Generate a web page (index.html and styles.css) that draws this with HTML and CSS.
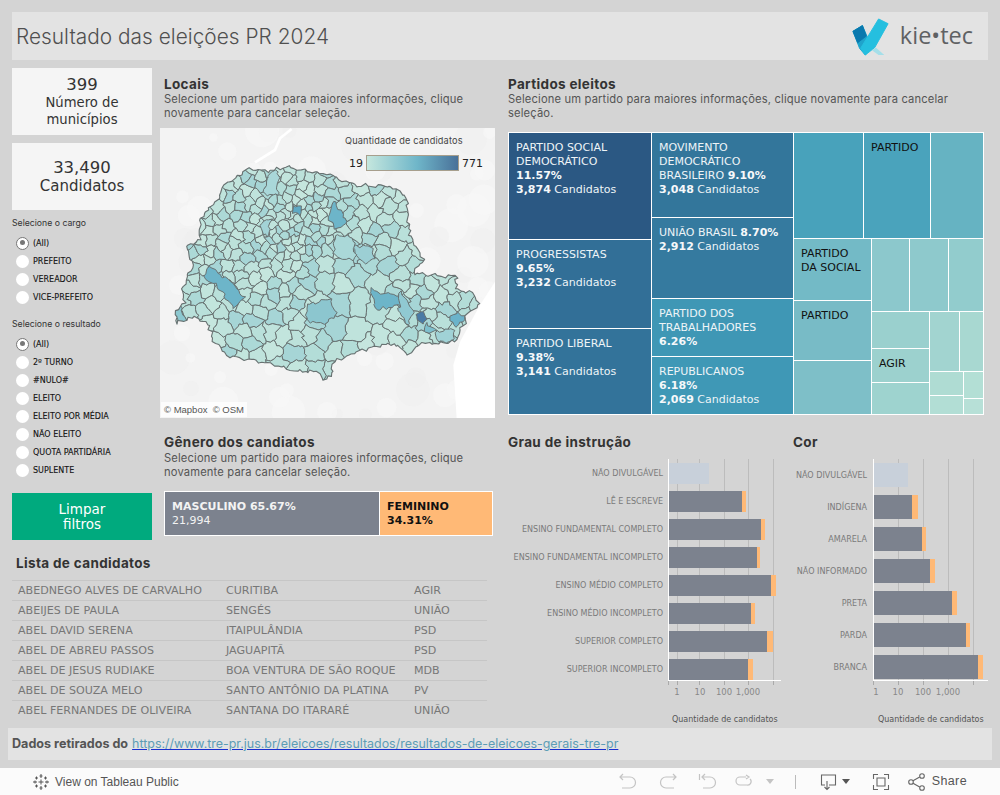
FILE: index.html
```html
<!DOCTYPE html>
<html lang="pt-BR">
<head>
<meta charset="utf-8">
<title>Resultado das eleições PR 2024</title>
<link rel="stylesheet" href="styles.css">
</head>
<body>
<header class="header">
  <h1 class="title">Resultado das eleições PR 2024</h1>
  <div class="logo">
    <svg class="logo-mark" viewBox="0 0 40 42" width="38" height="40" aria-hidden="true">
      <path d="M1 15 11 9 20 30 14 40 8 33Z" fill="#1fa3cb" stroke="#1fa3cb" stroke-linejoin="round"/>
      <path d="M1 15 11 9 15 20 6 27Z" fill="#0a79ae" stroke="#0a79ae" stroke-linejoin="round"/>
      <path d="M28 2 38 7 24 32 14 40 9 33Z" fill="#25bfdf" stroke="#25bfdf" stroke-linejoin="round"/>
      <path d="M25 32 34 40 28 40 21 35Z" fill="#a5dfe9"/>
    </svg>
    <span class="logo-text">kie•tec</span>
  </div>
</header>

<main class="main">
  <div class="wide">
    <div class="upper">
      <aside class="side">
        <div class="card">
          <div class="card-num">399</div>
          <div class="card-label">Número de municípios</div>
        </div>
        <div class="card card-second">
          <div class="card-num">33,490</div>
          <div class="card-label card-label-big">Candidatos</div>
        </div>
        <div class="filter-title">Selecione o cargo</div>
        <ul class="radios">
          <li class="radio-row"><span class="radio radio-on"></span>(All)</li>
          <li class="radio-row"><span class="radio"></span>PREFEITO</li>
          <li class="radio-row"><span class="radio"></span>VEREADOR</li>
          <li class="radio-row"><span class="radio"></span>VICE-PREFEITO</li>
        </ul>
        <div class="filter-title filter-title-second">Selecione o resultado</div>
        <ul class="radios">
          <li class="radio-row"><span class="radio radio-on"></span>(All)</li>
          <li class="radio-row"><span class="radio"></span>2º TURNO</li>
          <li class="radio-row"><span class="radio"></span>#NULO#</li>
          <li class="radio-row"><span class="radio"></span>ELEITO</li>
          <li class="radio-row"><span class="radio"></span>ELEITO POR MÉDIA</li>
          <li class="radio-row"><span class="radio"></span>NÃO ELEITO</li>
          <li class="radio-row"><span class="radio"></span>QUOTA PARTIDÁRIA</li>
          <li class="radio-row"><span class="radio"></span>SUPLENTE</li>
        </ul>
        <button class="clear-btn">Limpar<br>filtros</button>
      </aside>

      <section class="mid">
        <div class="intro">
          <h2 class="heading">Locais</h2>
          <p class="desc">Selecione um partido para maiores informações, clique novamente para cancelar seleção.</p>
        </div>
        <div class="map">
          <svg id="map-svg" class="map-svg" viewBox="0 9 1005 870" aria-hidden="true"></svg>
          <div class="legend">
            <div class="legend-title">Quantidade de candidatos</div>
            <div class="legend-row"><span>19</span><span class="legend-ramp"></span><span>771</span></div>
          </div>
          <div class="attrib">© Mapbox&nbsp; © OSM</div>
        </div>
        <div class="intro intro-gender">
          <h2 class="heading">Gênero dos candiatos</h2>
          <p class="desc">Selecione um partido para maiores informações, clique novamente para cancelar seleção.</p>
        </div>
        <div class="gender">
          <div class="gender-m"><b>MASCULINO 65.67%</b><br>21,994</div>
          <div class="gender-f"><b>FEMININO<br>34.31%</b></div>
        </div>
      </section>
    </div>

    <section class="list">
      <h2 class="heading list-heading">Lista de candidatos</h2>
      <div class="list-table">
        <div class="list-row"><span>ABEDNEGO ALVES DE CARVALHO</span><span>CURITIBA</span><span>AGIR</span></div>
        <div class="list-row"><span>ABEIJES DE PAULA</span><span>SENGÉS</span><span>UNIÃO</span></div>
        <div class="list-row"><span>ABEL DAVID SERENA</span><span>ITAIPULÂNDIA</span><span>PSD</span></div>
        <div class="list-row"><span>ABEL DE ABREU PASSOS</span><span>JAGUAPITÃ</span><span>PSD</span></div>
        <div class="list-row"><span>ABEL DE JESUS RUDIAKE</span><span>BOA VENTURA DE SÃO ROQUE</span><span>MDB</span></div>
        <div class="list-row"><span>ABEL DE SOUZA MELO</span><span>SANTO ANTÔNIO DA PLATINA</span><span>PV</span></div>
        <div class="list-row"><span>ABEL FERNANDES DE OLIVEIRA</span><span>SANTANA DO ITARARÉ</span><span>UNIÃO</span></div>
      </div>
    </section>
  </div>

  <div class="right">
    <div class="intro intro-right">
      <h2 class="heading">Partidos eleitos</h2>
      <p class="desc">Selecione um partido para maiores informações, clique novamente para cancelar seleção.</p>
    </div>
    <div class="tm">
      <div class="tm-col" style="width:142px">
        <div class="tm-cell tm-light" style="height:106px;background:#2b5883">PARTIDO SOCIAL DEMOCRÁTICO<br><b>11.57%</b><br><b>3,874</b> Candidatos</div>
        <div class="tm-cell tm-light" style="height:88px;background:#326f97">PROGRESSISTAS<br><b>9.65%</b><br><b>3,232</b> Candidatos</div>
        <div class="tm-cell tm-light" style="height:85px;background:#33739a">PARTIDO LIBERAL<br><b>9.38%</b><br><b>3,141</b> Candidatos</div>
      </div>
      <div class="tm-col" style="width:141px">
        <div class="tm-cell tm-light" style="height:84px;background:#33769b">MOVIMENTO DEMOCRÁTICO BRASILEIRO <b>9.10%</b><br><b>3,048</b> Candidatos</div>
        <div class="tm-cell tm-light" style="height:80px;background:#357a9f">UNIÃO BRASIL <b>8.70%</b><br><b>2,912</b> Candidatos</div>
        <div class="tm-cell tm-light" style="height:57px;background:#3f97b5">PARTIDO DOS TRABALHADORES<br><b>6.26%</b></div>
        <div class="tm-cell tm-light" style="height:57px;background:#3f98b6">REPUBLICANOS<br><b>6.18%</b><br><b>2,069</b> Candidatos</div>
      </div>
      <div class="tm-col" style="width:189px">
        <div class="tm-row" style="height:105px">
          <div class="tm-cell" style="width:69px;background:#48a2bb"></div>
          <div class="tm-cell" style="width:66px;background:#4aa3bc">PARTIDO</div>
          <div class="tm-cell" style="width:52px;background:#66b3c2"></div>
        </div>
        <div class="tm-row" style="height:175px">
          <div class="tm-col" style="width:77px">
            <div class="tm-cell" style="height:61px;background:#73bac6">PARTIDO DA SOCIAL</div>
            <div class="tm-cell" style="height:59px;background:#78bbc6">PARTIDO</div>
            <div class="tm-cell" style="height:53px;background:#7ebfc8"></div>
          </div>
          <div class="tm-col" style="width:111px">
            <div class="tm-row" style="height:72px">
              <div class="tm-cell" style="width:37px;background:#8cc8cc"></div>
              <div class="tm-cell" style="width:38px;background:#8ec9cc"></div>
              <div class="tm-cell" style="width:34px;background:#92cccd"></div>
            </div>
            <div class="tm-row" style="height:102px">
              <div class="tm-col" style="width:57px">
                <div class="tm-cell" style="height:36px;background:#9ad0ce"></div>
                <div class="tm-cell" style="height:33px;background:#9cd1ce">AGIR</div>
                <div class="tm-cell" style="height:31px;background:#9ed3cf"></div>
              </div>
              <div class="tm-col" style="width:53px">
                <div class="tm-row" style="height:59px">
                  <div class="tm-cell" style="width:29px;background:#a2d4d0"></div>
                  <div class="tm-cell" style="width:23px;background:#a8d8d1"></div>
                </div>
                <div class="tm-row" style="height:42px">
                  <div class="tm-col" style="width:33px">
                    <div class="tm-cell" style="height:23px;background:#afdcd3"></div>
                    <div class="tm-cell" style="height:18px;background:#b2ded5"></div>
                  </div>
                  <div class="tm-col" style="width:19px">
                    <div class="tm-cell" style="height:26px;background:#b3dfd5"></div>
                    <div class="tm-cell" style="height:15px;background:#b7e0d7"></div>
                  </div>
                </div>
              </div>
            </div>
          </div>
        </div>
      </div>
    </div>

    <div class="charts">
      <section class="chart-grau">
        <h2 class="heading">Grau de instrução</h2>
        <div class="chart">
          <i class="gridline" style="left:169px"></i><i class="gridline" style="left:191px"></i><i class="gridline" style="left:216px"></i><i class="gridline" style="left:240px"></i><i class="gridline" style="left:265px"></i>
          <div class="rows">
            <div class="row"><span class="row-label">NÃO DIVULGÁVEL</span><span class="plot"><b class="bar bar-na" style="width:40px"></b></span></div>
            <div class="row"><span class="row-label">LÊ E ESCREVE</span><span class="plot"><b class="bar bar-m" style="width:73px"></b><b class="bar bar-f" style="width:4px"></b></span></div>
            <div class="row"><span class="row-label">ENSINO FUNDAMENTAL COMPLETO</span><span class="plot"><b class="bar bar-m" style="width:92px"></b><b class="bar bar-f" style="width:4px"></b></span></div>
            <div class="row"><span class="row-label">ENSINO FUNDAMENTAL INCOMPLETO</span><span class="plot"><b class="bar bar-m" style="width:88px"></b><b class="bar bar-f" style="width:3px"></b></span></div>
            <div class="row"><span class="row-label">ENSINO MÉDIO COMPLETO</span><span class="plot"><b class="bar bar-m" style="width:102px"></b><b class="bar bar-f" style="width:5px"></b></span></div>
            <div class="row"><span class="row-label">ENSINO MÉDIO INCOMPLETO</span><span class="plot"><b class="bar bar-m" style="width:82px"></b><b class="bar bar-f" style="width:4px"></b></span></div>
            <div class="row"><span class="row-label">SUPERIOR COMPLETO</span><span class="plot"><b class="bar bar-m" style="width:98px"></b><b class="bar bar-f" style="width:6px"></b></span></div>
            <div class="row"><span class="row-label">SUPERIOR INCOMPLETO</span><span class="plot"><b class="bar bar-m" style="width:79px"></b><b class="bar bar-f" style="width:5px"></b></span></div>
          </div>
          <div class="axis">
            <i class="tick" style="left:0"></i><i class="tick" style="left:9px"></i><i class="tick" style="left:31px"></i><i class="tick" style="left:56px"></i><i class="tick" style="left:80px"></i><i class="tick" style="left:105px"></i>
            <span class="tick-label" style="left:9px">1</span><span class="tick-label" style="left:32px">10</span><span class="tick-label" style="left:56px">100</span><span class="tick-label" style="left:80px">1,000</span>
          </div>
          <div class="axis-title">Quantidade de candidatos</div>
        </div>
      </section>
      <section class="chart-cor">
        <h2 class="heading">Cor</h2>
        <div class="chart">
          <i class="gridline" style="left:105px"></i><i class="gridline" style="left:130px"></i><i class="gridline" style="left:155px"></i><i class="gridline" style="left:180px"></i>
          <div class="rows">
            <div class="row"><span class="row-label">NÃO DIVULGÁVEL</span><span class="plot"><b class="bar bar-na" style="width:34px"></b></span></div>
            <div class="row"><span class="row-label">INDÍGENA</span><span class="plot"><b class="bar bar-m" style="width:38px"></b><b class="bar bar-f" style="width:6px"></b></span></div>
            <div class="row"><span class="row-label">AMARELA</span><span class="plot"><b class="bar bar-m" style="width:48px"></b><b class="bar bar-f" style="width:4px"></b></span></div>
            <div class="row"><span class="row-label">NÃO INFORMADO</span><span class="plot"><b class="bar bar-m" style="width:56px"></b><b class="bar bar-f" style="width:5px"></b></span></div>
            <div class="row"><span class="row-label">PRETA</span><span class="plot"><b class="bar bar-m" style="width:78px"></b><b class="bar bar-f" style="width:5px"></b></span></div>
            <div class="row"><span class="row-label">PARDA</span><span class="plot"><b class="bar bar-m" style="width:92px"></b><b class="bar bar-f" style="width:4px"></b></span></div>
            <div class="row"><span class="row-label">BRANCA</span><span class="plot"><b class="bar bar-m" style="width:104px"></b><b class="bar bar-f" style="width:5px"></b></span></div>
          </div>
          <div class="axis">
            <i class="tick" style="left:0"></i><i class="tick" style="left:25px"></i><i class="tick" style="left:50px"></i><i class="tick" style="left:75px"></i><i class="tick" style="left:100px"></i>
            <span class="tick-label" style="left:3px">1</span><span class="tick-label" style="left:25px">10</span><span class="tick-label" style="left:50px">100</span><span class="tick-label" style="left:75px">1,000</span>
          </div>
          <div class="axis-title">Quantidade de candidatos</div>
        </div>
      </section>
    </div>
  </div>
</main>

<footer class="source">
  <b class="source-label">Dados retirados do</b>
  <a class="source-link" href="#">https://www.tre-pr.jus.br/eleicoes/resultados/resultados-de-eleicoes-gerais-tre-pr</a>
</footer>

<nav class="toolbar">
  <div class="tb-left">
    <svg class="tb-logo" viewBox="0 0 18 18" width="18" height="18" aria-hidden="true">
      <path d="M9 1v4M7.500 3h3M9 13v4M7.500 15h3M1 9h4M3 7.500v3M13 9h4M15 7.500v3M9 6.500v5M6.500 9h5M4.500 3.500v3M3 5h3M13.500 3.500v3M12 5h3M4.500 11.500v3M3 13h3M13.500 11.500v3M12 13h3" fill="none" stroke="#555" stroke-width="1"/>
    </svg>
    <span>View on Tableau Public</span>
  </div>
  <div class="tb-right">
    <svg class="tb-icon" viewBox="0 0 20 20" width="20" height="20" aria-hidden="true"><path d="M2 5h10a5.500 5.500 0 0 1 0 11H4M5 2 2 5l3 3" class="stroke-dim"/></svg>
    <svg class="tb-icon" viewBox="0 0 20 20" width="20" height="20" aria-hidden="true"><path d="M18 5H8a5.500 5.500 0 0 0 0 11h8M15 2l3 3-3 3" class="stroke-dim"/></svg>
    <svg class="tb-icon tb-revert" viewBox="0 0 20 20" width="20" height="20" aria-hidden="true"><path d="M4 5h8a5.500 5.500 0 0 1 0 11H5M7 2 4 5l3 3M1.500 2v6" class="stroke-dim"/></svg>
    <svg class="tb-icon tb-refresh" viewBox="0 0 20 20" width="20" height="20" aria-hidden="true"><path d="M13 5H7a3.500 3.500 0 0 0 0 8h7a3.500 3.500 0 0 0 3-6M13 3l3 2-3 2" class="stroke-dim"/></svg>
    <span class="caret caret-dim"></span>
    <span class="tb-sep"></span>
    <svg class="tb-icon tb-download" viewBox="0 0 20 20" width="20" height="20" aria-hidden="true"><path d="M6 13H2.500V3h14v10H10M8 9v8M5.500 15 8 17.500 10.500 15" class="stroke-dark"/></svg>
    <span class="caret"></span>
    <svg class="tb-icon tb-full" viewBox="0 0 20 20" width="20" height="20" aria-hidden="true"><path d="M2.500 7V2.500H7M13 2.500h4.500V7M2.500 13v4.500H7M13 17.500h4.500V13M6 6h8v8H6z" class="stroke-dark"/></svg>
    <svg class="tb-icon tb-share" viewBox="0 0 20 20" width="20" height="20" aria-hidden="true"><path d="M6 8.800 12.700 5M6 11.200l6.700 3.800" class="stroke-dark"/><circle cx="4" cy="10" r="2.300" class="stroke-dark"/><circle cx="15" cy="4" r="2.300" class="stroke-dark"/><circle cx="15" cy="16" r="2.300" class="stroke-dark"/></svg>
    <span class="tb-share-label">Share</span>
  </div>
</nav>
<script src="map.js"></script>
</body>
</html>
```

FILE: styles.css
```css
* { box-sizing: border-box; }
html, body { margin: 0; padding: 0; }
body {
  width: 1000px; height: 795px; overflow: hidden;
  background: #d4d4d4; color: #333;
  font-family: "DejaVu Sans", sans-serif;
  padding-top: 12px;
}
h1, h2, p, ul { margin: 0; padding: 0; }
ul { list-style: none; }

.header {
  height: 48px; margin: 0 12px; background: #e3e3e3;
  display: flex; align-items: center; justify-content: space-between;
  padding: 0 15px 0 4px;
}
.title { font: 300 20.8px/1 "Inter", sans-serif; color: #505050; letter-spacing: 0.04px; padding-top: 2px; }
.logo { display: flex; align-items: center; gap: 10px; }
.logo-mark { display: block; margin-top: 2px; }
.logo-text { font: 400 23.5px/1 "Open Sans", sans-serif; color: #5f6163; letter-spacing: 0; }

.main { display: flex; height: 660px; margin-top: 8px; padding-left: 12px; }
.wide { width: 484px; margin-right: 12px; }
.upper { display: flex; height: 487px; }
.side { width: 140px; flex: none; }
.card {
  height: 67px; background: #f5f5f5; text-align: center;
  display: flex; flex-direction: column; justify-content: center;
  color: #333;
}
.card-second { margin-top: 8px; }
.card-num { font-size: 16.5px; line-height: 18px; }
.card-label { font-size: 13.2px; line-height: 17px; width: 110px; margin: 0 auto; }
.card-label-big { font-size: 15px; line-height: 18px; }
.filter-title { font: 400 8.7px/10px "Inter", sans-serif; color: #333; margin-top: 8px; height: 16px; }
.filter-title-second { margin-top: 13px; }
.radio-row {
  height: 18px; display: flex; align-items: center; padding-left: 4px; gap: 4px;
  font-size: 8px; color: #111; -webkit-text-stroke: 0.1px #111;
}
.radio {
  width: 13px; height: 13px; border-radius: 50%; background: #fff; flex: none; position: relative;
}
.radio-on { border: 1.500px solid #777; }
.radio-on::after {
  content: ""; position: absolute; left: 2.500px; top: 2.500px;
  width: 5px; height: 5px; border-radius: 50%; background: #777;
}
.clear-btn {
  display: block; width: 140px; height: 47px; margin-top: 14px; border: 0; padding: 0;
  background: #00aa7e; color: #fff; font: 400 13.5px/15px "DejaVu Sans", sans-serif;
}

.mid { width: 336px; margin-left: 8px; flex: none; }
.intro { padding-left: 4px; height: 60px; padding-top: 8px; }
.heading { font: 700 13.5px/16px "Inter", sans-serif; color: #333; letter-spacing: 0.35px; }
.desc { font: 400 11.2px/14px "Inter", sans-serif; color: #555; letter-spacing: 0.15px; }
.map { position: relative; width: 335px; height: 290px; background: #f3f3f3; overflow: hidden; }
.map-svg { display: block; width: 335px; height: 290px; }
.legend { position: absolute; left: 185px; top: 7px; width: 150px; }
.legend-title { font: 400 9.2px/12px "Inter", sans-serif; color: #444; letter-spacing: .15px; }
.legend-row { display: flex; align-items: center; margin-top: 8px; font-size: 11px; color: #222; padding-left: 4px; }
.legend-ramp {
  flex: none; width: 93px; height: 16px; margin: 0 3px;
  border: 1px solid #a79f8d;
  background: linear-gradient(90deg, #c5e7de, #6fb6c9 55%, #497199);
}
.attrib {
  position: absolute; left: 1px; bottom: 1px; padding: 2px 3px; height: 15px;
  background: rgba(255,255,255,.75); color: #555;
  font: 400 9.5px/11px "Liberation Sans", sans-serif;
}
.intro-gender { height: 73px; padding-top: 16px; }
.intro-gender .heading { margin-bottom: 1px; }
.gender {
  margin-left: 4px; width: 329px; height: 45px; border: 1px solid #fff; background: #fff;
  display: flex; gap: 1px; font-size: 11px; line-height: 14px;
}
.gender-m { width: 214px; background: #7c828e; color: #f3f3f3; padding: 8px 7px; }
.gender-f { flex: 1; background: #ffb976; color: #111; padding: 8px 7px; }

.list-heading { padding-left: 4px; height: 25px; }
.list-table { width: 475px; }
.list-row {
  display: grid; grid-template-columns: 208px 188px 73px;
  height: 20px; align-items: center; padding-left: 6px;
  border-top: 1px solid #c6c6c6;
  font-size: 11.1px; color: #777;
}
.list-row span { white-space: nowrap; }

.right { width: 480px; flex: none; }
.intro-right { padding-left: 0; height: 64px; }
.tm {
  width: 476px; height: 283px; padding: 1px; background: #fff;
  display: flex; gap: 1px; font-size: 11px; line-height: 14px;
}
.tm-col { display: flex; flex-direction: column; gap: 1px; flex: none; }
.tm-row { display: flex; gap: 1px; flex: none; }
.tm-cell { padding: 8px 7px 0; color: #111; flex: none; overflow: hidden; }
.tm-light { color: #eef4f7; }
.tm-light b { color: #f6f8fa; }

.charts { display: flex; margin-top: 19px; }
.chart-grau { width: 285px; }
.chart-cor { width: 195px; }
.chart { position: relative; margin-top: 9px; }
.gridline { position: absolute; top: 0; width: 1px; height: 225px; background: #bcbcbc; }
.rows { display: flex; flex-direction: column; padding-top: 4px; position: relative; }
.chart-grau .rows { gap: 7px; }
.chart-cor .rows { gap: 8px; padding-bottom: 1px; }
.row { display: flex; align-items: center; height: 21px; }
.chart-cor .row { height: 24px; }
.row-label {
  width: 155px; flex: none; text-align: right;
  font-size: 8.05px; color: #7a7a7a; white-space: nowrap;
}
.chart-cor .row-label { width: 80px; padding-right: 6px; }
.plot { display: flex; height: 100%; }
.rows::before { content: ""; position: absolute; top: 0; bottom: 0; width: 1px; background: #fff; }
.chart-grau .rows::before { left: 160px; }
.chart-cor .rows::before { left: 80px; }
.chart-grau .row .plot { margin-left: 6px; }
.chart-cor .row .plot { margin-left: 1px; }
.bar { display: block; height: 100%; position: relative; }
.bar-na { background: #c8d0da; }
.bar-m { background: #7c828e; }
.bar-f { background: #ffb976; }
.axis { position: relative; height: 26px; border-top: 1px solid #fff; }
.chart-grau .axis { margin-left: 160px; width: 113px; }
.chart-cor .axis { margin-left: 80px; width: 115px; }
.tick { position: absolute; top: 0; width: 1px; height: 4px; background: #aaa; }
.tick-label {
  position: absolute; top: 6px; transform: translateX(-50%);
  font-size: 8.5px; line-height: 11px; color: #888; white-space: nowrap;
}
.axis-title { font-size: 8px; line-height: 10px; color: #555; position: absolute; top: 256px; white-space: nowrap; }
.chart-grau .axis-title { left: 164px; }
.chart-cor .axis-title { left: 85px; }

.source {
  height: 32px; margin: 0 8px; background: #e3e3e3; padding-left: 4px;
  display: flex; align-items: center; gap: 4px; font: 400 12.45px/1 "Inter", sans-serif; color: #555;
}
.source-label { font-weight: 700; font-size: 12.6px; color: #555; }
.source-link { color: #5d9db5; text-decoration: underline; text-decoration-color: #1a2fd0; }

.toolbar {
  height: 27px; margin-top: 8px; background: #fbfbfb;
  display: flex; align-items: center; justify-content: space-between;
  padding: 0 33px 0 32px;
  font: 400 12px/1 "Liberation Sans", sans-serif; color: #555;
}
.tb-left, .tb-right { display: flex; align-items: center; }
.tb-left { gap: 5px; }
.tb-icon { display: block; margin-right: 20px; }
.stroke-dim { fill: none; stroke: #c4c4c4; stroke-width: 1.200; }
.stroke-dark { fill: none; stroke: #666; stroke-width: 1.100; }
.tb-revert { margin-right: 15px; }
.tb-refresh { margin-right: 13px; }
.caret { width: 0; height: 0; border-left: 4px solid transparent; border-right: 4px solid transparent; border-top: 5px solid #555; }
.caret-dim { border-top-color: #c4c4c4; margin-right: 21px; }
.tb-sep { width: 1px; height: 14px; background: #bbb; margin-right: 23px; }
.tb-download { margin-right: 3px; }
.tb-download + .caret { margin-right: 21px; }
.tb-full { margin-right: 16px; }
.tb-share { margin-right: 5px; }
.tb-share-label { font-size: 12.500px; letter-spacing: .4px; }
```

FILE: map.js
```js
(function () {
  var NS = "http://www.w3.org/2000/svg";
  var svg = document.getElementById("map-svg");
  var outline = [[45,590],[50,552],[75,535],[66,500],[80,460],[100,420],[85,392],[82,360],[120,345],[118,310],[130,265],[175,225],[190,180],[240,150],[270,130],[320,138],[385,125],[440,140],[500,145],[560,170],[590,182],[690,183],[740,215],[745,300],[755,340],[790,400],[760,445],[810,450],[890,455],[885,495],[930,500],[958,535],[920,575],[885,650],[830,655],[780,655],[745,690],[700,655],[640,665],[590,680],[520,710],[515,755],[490,762],[470,740],[400,738],[340,720],[270,705],[200,690],[160,650],[145,600],[110,575],[70,585],[50,598]];
  var seed = 12345;
  function rnd() { seed = (seed * 1664525 + 1013904223) >>> 0; return seed / 4294967296; }
  function inside(p, poly) {
    var c = false;
    for (var i = 0, j = poly.length - 1; i < poly.length; j = i++) {
      var a = poly[i], b = poly[j];
      if ((a[1] > p[1]) !== (b[1] > p[1]) && p[0] < (b[0] - a[0]) * (p[1] - a[1]) / (b[1] - a[1]) + a[0]) c = !c;
    }
    return c;
  }
  function spacing(x, y) {
    var r = 25;
    if (x > 300 && x < 520 && y > 220 && y < 400) r = 19;
    if (y > 420) r += (y - 420) * 0.06;
    if (x > 470) r += (x - 470) * 0.03;
    if (x > 450 && x < 720 && y > 380 && y < 650) r += 20;
    if (x > 700 && y > 480) r -= 10;
    return r;
  }
  var sites = [];
  for (var t = 0; t < 40000; t++) {
    var p = [40 + rnd() * 920, 120 + rnd() * 645];
    if (!inside(p, outline)) continue;
    var r = spacing(p[0], p[1]), ok = true;
    for (var i = 0; i < sites.length; i++) {
      var dx = sites[i][0] - p[0], dy = sites[i][1] - p[1];
      if (dx * dx + dy * dy < r * r) { ok = false; break; }
    }
    if (ok) sites.push(p);
  }
  function clip(poly, a, b) {
    var mx = (a[0] + b[0]) / 2, my = (a[1] + b[1]) / 2, nx = b[0] - a[0], ny = b[1] - a[1], out = [];
    for (var i = 0; i < poly.length; i++) {
      var p = poly[i], q = poly[(i + 1) % poly.length];
      var dp = (p[0] - mx) * nx + (p[1] - my) * ny, dq = (q[0] - mx) * nx + (q[1] - my) * ny;
      if (dp <= 0) out.push(p);
      if ((dp < 0 && dq > 0) || (dp > 0 && dq < 0)) {
        var s = dp / (dp - dq);
        out.push([p[0] + (q[0] - p[0]) * s, p[1] + (q[1] - p[1]) * s]);
      }
    }
    return out;
  }
  function warp(p) {
    var x = p[0], y = p[1];
    return [
      x + 3.2 * Math.sin(y * 0.17 + x * 0.05) + 2.4 * Math.sin(y * 0.41 - x * 0.23) + 1.5 * Math.sin(x * 0.71 + y * 0.13),
      y + 3.2 * Math.sin(x * 0.15 - y * 0.07) + 2.4 * Math.sin(x * 0.37 + y * 0.29) + 1.5 * Math.sin(y * 0.67 - x * 0.17)
    ];
  }
  function wiggle(poly) {
    var d = "";
    for (var i = 0; i < poly.length; i++) {
      var a = poly[i], b = poly[(i + 1) % poly.length];
      var len = Math.hypot(b[0] - a[0], b[1] - a[1]), n = Math.max(1, Math.round(len / 9));
      for (var k = 0; k < n; k++) {
        var w = warp([a[0] + (b[0] - a[0]) * k / n, a[1] + (b[1] - a[1]) * k / n]);
        d += (d ? "L" : "M") + w[0].toFixed(1) + " " + w[1].toFixed(1);
      }
    }
    return d + "Z";
  }
  function el(name, attrs, parent) {
    var e = document.createElementNS(NS, name);
    for (var k in attrs) e.setAttribute(k, attrs[k]);
    (parent || svg).appendChild(e);
    return e;
  }
  // base map: mottled terrain, white sea and a river
  for (var b = 0; b < 90; b++) {
    el("circle", { cx: rnd() * 1005, cy: 9 + rnd() * 870, r: 12 + rnd() * 40, fill: rnd() > 0.5 ? "#f8f8f8" : "#efefef", opacity: 0.55 });
  }
  el("path", { d: "M1005 470 L960 540 L900 650 L880 720 L890 880 L1005 880Z", fill: "#fff" });
  el("path", { d: "M395 12 L360 40 L345 75 L285 112", fill: "none", stroke: "#fff", "stroke-width": 8 });
  var outlinePath = wiggle(outline);
  var defs = el("defs", {});
  var cp = el("clipPath", { id: "state" }, defs);
  el("path", { d: outlinePath }, cp);
  var g = el("g", { "clip-path": "url(#state)" });
  var fills = ["#c2e5dd", "#bfe3dc", "#b9e0da", "#b3ddd8", "#c5e6de", "#bce1da", "#acd9d7", "#a6d5d6"];
  var line = "#687272";
  sites.forEach(function (s, idx) {
    var cell = [[0, 0], [1100, 0], [1100, 900], [0, 900]];
    for (var j = 0; j < sites.length && cell.length; j++) {
      if (j !== idx) cell = clip(cell, s, sites[j]);
    }
    if (cell.length < 3) return;
    el("path", { d: wiggle(cell), fill: fills[Math.floor(rnd() * fills.length)], stroke: line, "stroke-width": 3, "stroke-linejoin": "round" }, g);
  });
  var specials = [
    [[520,228],[558,280],[555,305],[525,310],[505,275],"#6db5c9"],
    [[400,245],[425,240],[420,270],[395,262],"#5fa9c4"],
    [[130,450],[150,425],[205,465],[255,515],[225,550],[205,530],[175,490],"#6db5c9"],
    [[630,490],[665,505],[725,510],[720,540],[650,555],"#6db5c9"],
    [[440,540],[510,520],[530,570],[490,600],[440,585],"#8cc6cf"],
    [[795,590],[830,620],[795,622],"#7dbfcd"],
    [[770,565],[795,555],[797,585],[785,598],[772,585],"#4a7aa5"],
    [[870,575],[895,560],[920,575],[885,605],"#6bb3ca"],
    [[585,360],[630,365],[645,400],[615,415],[585,395],"#9ccfd4"],
    [[305,285],[335,285],[320,335],[305,330],"#a3d3d6"],
    [[330,140],[355,140],[352,210],[310,208],"#a9d7d9"],
    [[45,570],[60,540],[80,590],[55,600],"#8cc8d0"],
    [[830,620],[885,610],[880,650],[830,652],"#a0d2d6"],
    [[720,500],[760,560],[745,600],[715,560],"#90c9d2"],
    [[530,330],[580,340],[585,400],[545,405],[520,380],"#aad8d8"]
  ];
  specials.forEach(function (sp) {
    var col = sp[sp.length - 1], poly = sp.slice(0, -1);
    el("path", { d: wiggle(poly), fill: col, stroke: line, "stroke-width": 3, "stroke-linejoin": "round" }, g);
  });
  el("path", { d: outlinePath, fill: "none", stroke: line, "stroke-width": 3.4, "stroke-linejoin": "round" });
})();
```
